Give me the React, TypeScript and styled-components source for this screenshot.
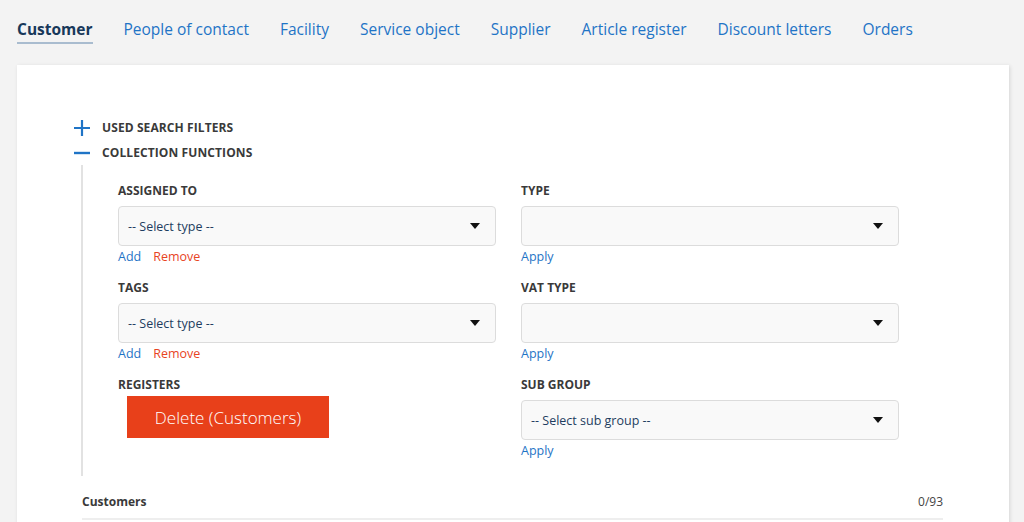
import React from "react";
import styled, { createGlobalStyle } from "styled-components";

const GlobalStyle = createGlobalStyle`
  html, body {
    margin: 0;
    padding: 0;
    background: #f3f3f3;
    font-family: "Open Sans", "Liberation Sans", sans-serif;
    color: #333;
  }
  * { box-sizing: border-box; }
`;

const TABS = [
  "Customer",
  "People of contact",
  "Facility",
  "Service object",
  "Supplier",
  "Article register",
  "Discount letters",
  "Orders",
];

type Field = {
  label: string;
  placeholder: string;
  links: "addRemove" | "apply";
};

const LEFT_FIELDS: Field[] = [
  { label: "Assigned to", placeholder: "-- Select type --", links: "addRemove" },
  { label: "Tags", placeholder: "-- Select type --", links: "addRemove" },
];

const RIGHT_FIELDS: Field[] = [
  { label: "Type", placeholder: "", links: "apply" },
  { label: "VAT type", placeholder: "", links: "apply" },
  { label: "Sub group", placeholder: "-- Select sub group --", links: "apply" },
];

const Caret = () => (
  <svg width="10" height="6" viewBox="0 0 10 6">
    <path d="M0 0 L10 0 L5 6 Z" fill="#111" />
  </svg>
);

const PlusIcon = () => (
  <svg width="18" height="18" viewBox="0 0 18 18">
    <path d="M9 1 V17 M1 9 H17" stroke="#1f74c6" strokeWidth="2.2" />
  </svg>
);

const MinusIcon = () => (
  <svg width="18" height="18" viewBox="0 0 18 18">
    <path d="M1 9 H17" stroke="#1f74c6" strokeWidth="2.4" />
  </svg>
);

const FieldBlock = ({ field }: { field: Field }) => (
  <SField>
    <SLabel>{field.label}</SLabel>
    <SSelect>
      <span>{field.placeholder}</span>
      <Caret />
    </SSelect>
    <SLinks>
      {field.links === "addRemove" ? (
        <>
          <SLink>Add</SLink>
          <SLink $danger>Remove</SLink>
        </>
      ) : (
        <SLink>Apply</SLink>
      )}
    </SLinks>
  </SField>
);

const App = () => {
  return (
    <>
      <GlobalStyle />
      <SPage>
        <STabs>
          {TABS.map((tab, i) => (
            <STab key={tab} $active={i === 0}>
              {tab}
            </STab>
          ))}
        </STabs>

        <SCard>
          <SToggle>
            <SToggleIcon>
              <PlusIcon />
            </SToggleIcon>
            <SToggleTitle>Used search filters</SToggleTitle>
          </SToggle>
          <SToggle>
            <SToggleIcon>
              <MinusIcon />
            </SToggleIcon>
            <SToggleTitle>Collection functions</SToggleTitle>
          </SToggle>

          <SCollapse>
            <SGrid>
              <SColumn>
                {LEFT_FIELDS.map((f) => (
                  <FieldBlock key={f.label} field={f} />
                ))}
                <SField>
                  <SLabel>Registers</SLabel>
                  <SDeleteButton>Delete (Customers)</SDeleteButton>
                </SField>
              </SColumn>
              <SColumn>
                {RIGHT_FIELDS.map((f) => (
                  <FieldBlock key={f.label} field={f} />
                ))}
              </SColumn>
            </SGrid>
          </SCollapse>

          <SListHeader>
            <SListTitle>Customers</SListTitle>
            <SCount>0/93</SCount>
          </SListHeader>
        </SCard>
      </SPage>
    </>
  );
};

const SPage = styled.div`
  padding: 0 15px 0 17px;
  height: 522px;
  overflow: hidden;
`;

const STabs = styled.nav`
  display: flex;
  gap: 31px;
  padding-top: 17px;
  height: 65px;
`;

const STab = styled.a<{ $active?: boolean }>`
  font-size: 15.5px;
  line-height: 24px;
  height: 27px;
  color: ${({ $active }) => ($active ? "#17385a" : "#1f74c6")};
  font-weight: ${({ $active }) => ($active ? 700 : 400)};
  border-bottom: 2px solid ${({ $active }) => ($active ? "#a9bccf" : "transparent")};
  cursor: pointer;
`;

const SCard = styled.section`
  background: #fff;
  width: 992px;
  min-height: 480px;
  box-shadow: 1px 1px 4px rgba(0, 0, 0, 0.12);
  padding: 50px 66px 0 65px;
`;

const SToggle = styled.div`
  display: flex;
  align-items: center;
  height: 25px;
  margin-left: -9px;
`;

const SToggleIcon = styled.span`
  display: flex;
  width: 18px;
  height: 18px;
  margin-right: 11px;
`;

const SToggleTitle = styled.span`
  font-size: 12px;
  font-weight: 700;
  text-transform: uppercase;
  color: #3a3a3a;
  letter-spacing: 0.1px;
`;

const SCollapse = styled.div`
  border-left: 2px solid #e2e2e2;
  padding: 18px 0 17px 35px;
  margin-left: -1px;
`;

const SGrid = styled.div`
  display: grid;
  grid-template-columns: 378px 378px;
  column-gap: 25px;
`;

const SColumn = styled.div`
  display: flex;
  flex-direction: column;
  gap: 15px;
`;

const SField = styled.div`
  display: flex;
  flex-direction: column;
`;

const SLabel = styled.div`
  font-size: 12px;
  font-weight: 700;
  line-height: 16px;
  text-transform: uppercase;
  color: #3a3a3a;
  margin-bottom: 7px;
`;

const SSelect = styled.div`
  display: flex;
  align-items: center;
  justify-content: space-between;
  height: 40px;
  padding: 0 15px 0 9px;
  background: #f9f9f9;
  border: 1px solid #dcdcdc;
  border-radius: 4px;
  font-size: 12.5px;
  color: #1e3d5f;
`;

const SLinks = styled.div`
  display: flex;
  gap: 12px;
  margin-top: 3px;
  line-height: 16px;
`;

const SLink = styled.a<{ $danger?: boolean }>`
  font-size: 12.5px;
  color: ${({ $danger }) => ($danger ? "#e8441f" : "#1f74c6")};
  cursor: pointer;
`;

const SDeleteButton = styled.button`
  align-self: flex-start;
  margin-left: 9px;
  margin-top: -4px;
  width: 202px;
  height: 42px;
  border: none;
  background: #e8401a;
  color: #fff;
  font-family: inherit;
  font-size: 17px;
  font-weight: 300;
  cursor: pointer;
`;

const SListHeader = styled.div`
  display: flex;
  justify-content: space-between;
  align-items: center;
  padding: 17px 0 8px;
  border-bottom: 2px solid #eeeeee;
`;

const SListTitle = styled.span`
  font-size: 12px;
  font-weight: 700;
  color: #3a3a3a;
`;

const SCount = styled.span`
  font-size: 12px;
  color: #444;
`;

export default App;
